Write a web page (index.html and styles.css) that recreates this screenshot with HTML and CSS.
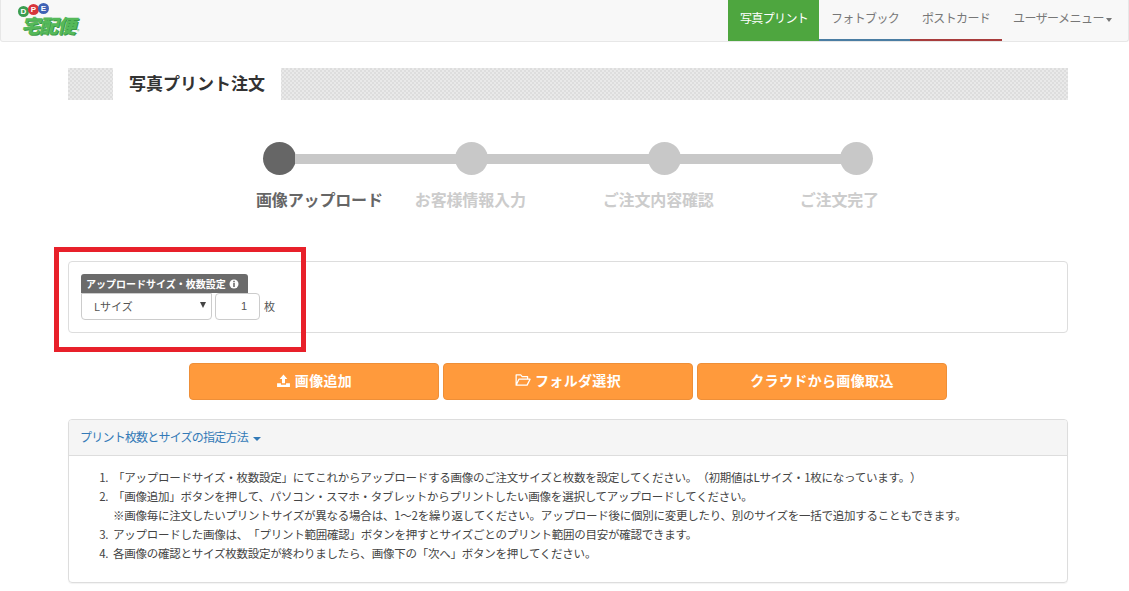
FILE: index.html
```html
<!DOCTYPE html>
<html lang="ja">
<head>
<meta charset="utf-8">
<title>写真プリント注文</title>
<link rel="stylesheet" href="styles.css">
</head>
<body>
<nav class="navbar">
  <div class="logo">
    <div class="logo-dots"><span class="dot dot-d">D</span><span class="dot dot-p">P</span><span class="dot dot-e">E</span></div>
    <div class="logo-name">宅配便<span class="logo-r">®</span></div>
  </div>
  <ul class="nav">
    <li class="nav-item nav-print">写真プリント</li>
    <li class="nav-item nav-book">フォトブック</li>
    <li class="nav-item nav-card">ポストカード</li>
    <li class="nav-item nav-user">ユーザーメニュー<span class="caret"></span></li>
  </ul>
</nav>
<main class="container">
  <h1 class="title-band"><span class="title-text">写真プリント注文</span></h1>

  <div class="stepper">
    <div class="track">
      <span class="circle circle-on"></span><span class="bar"></span>
      <span class="circle"></span><span class="bar"></span>
      <span class="circle"></span><span class="bar"></span>
      <span class="circle"></span>
    </div>
    <div class="step-labels">
      <span class="step-label step-on">画像アップロード</span>
      <span class="step-label step-2">お客様情報入力</span>
      <span class="step-label step-3">ご注文内容確認</span>
      <span class="step-label step-4">ご注文完了</span>
    </div>
  </div>

  <section class="size-panel">
    <div class="tag">アップロードサイズ・枚数設定
      <svg class="info" viewBox="0 0 10 10" width="10" height="10"><circle cx="5" cy="5" r="4.5" fill="#fff"/><rect x="4.2" y="1.8" width="1.6" height="1.5" fill="#6b6b6b"/><rect x="4.2" y="4" width="1.6" height="4" fill="#6b6b6b"/></svg>
    </div>
    <div class="size-row">
      <div class="select">Lサイズ<span class="select-arrow"></span></div>
      <div class="qty">1</div>
      <span class="unit">枚</span>
    </div>
  </section>

  <div class="actions">
    <button class="btn">
      <svg class="btn-icon" viewBox="0 0 14 14" width="15" height="15"><path d="M7 1.5 10.6 5.6H8.4V9.6H5.6V5.6H3.4Z" fill="#fff"/><path d="M1 9.5H4.6V11H9.4V9.5H13V13H1Z" fill="#fff"/></svg>
      画像追加</button>
    <button class="btn">
      <svg class="btn-icon" viewBox="0 0 14 14" width="16" height="16"><path d="M1 11.5V2.5H5L6.3 4H11V6.3M1 11.5H10.6L13.2 6.3H3.4L1 11.5Z" fill="none" stroke="#fff" stroke-width="1.1" stroke-linejoin="round"/></svg>
      フォルダ選択</button>
    <button class="btn">クラウドから画像取込</button>
  </div>

  <section class="help-panel">
    <div class="help-head">プリント枚数とサイズの指定方法<span class="caret caret-blue"></span></div>
    <ol class="help-list">
      <li>「アップロードサイズ・枚数設定」にてこれからアップロードする画像のご注文サイズと枚数を設定してください。（初期値はLサイズ・1枚になっています。）</li>
      <li>「画像追加」ボタンを押して、パソコン・スマホ・タブレットからプリントしたい画像を選択してアップロードしてください。<br>※画像毎に注文したいプリントサイズが異なる場合は、1～2を繰り返してください。アップロード後に個別に変更したり、別のサイズを一括で追加することもできます。</li>
      <li>アップロードした画像は、「プリント範囲確認」ボタンを押すとサイズごとのプリント範囲の目安が確認できます。</li>
      <li>各画像の確認とサイズ枚数設定が終わりましたら、画像下の「次へ」ボタンを押してください。</li>
    </ol>
  </section>
</main>
<div class="annotation"></div>
</body>
</html>
```

FILE: styles.css
```css
* { box-sizing: border-box; }
html, body { margin: 0; padding: 0; height: 591px; overflow: hidden; }
body {
  position: relative;
  background: #fff;
  color: #333;
  font-family: "Liberation Sans", "Noto Sans CJK JP", sans-serif;
  font-size: 12px;
  text-spacing-trim: space-all;
}
.navbar {
  height: 42px;
  display: flex;
  justify-content: space-between;
  background: #f8f8f8;
  border: 1px solid #e7e7e7;
  border-top: 0;
  border-radius: 0 0 3px 3px;
}
.logo { padding: 4px 0 0 17px; width: 90px; }
.logo-dots { display: flex; height: 12px; }
.dot {
  width: 11px; height: 11px; border-radius: 50%; margin-right: -1px;
  color: #fff; font-size: 8px; font-weight: 700; line-height: 11px; text-align: center;
  font-family: "Liberation Sans", sans-serif;
}
.dot-d { background: #3a9d50; margin-top: 2px; }
.dot-p { background: #d8353b; }
.dot-e { background: #3f62b5; margin-top: -1px; }
.logo-name {
  margin-left: 3px;
  font-family: "Noto Sans CJK JP", sans-serif;
  font-size: 19px; line-height: 17px; font-weight: 900; font-style: italic;
  color: #55b95a;
  text-shadow: 1px 1px 0 #3d9a48;
  letter-spacing: -1px;
  white-space: nowrap;
}
.logo-r { font-size: 5px; font-style: normal; font-weight: 400; text-shadow: none; margin-left: 2px; }
.nav { list-style: none; margin: 0; padding: 0; display: flex; height: 41px; }
.nav-item {
  font-family: "Noto Sans CJK JP", sans-serif;
  height: 41px; padding: 0 12px; line-height: 36px; color: #777; white-space: nowrap;
  letter-spacing: -.65px;
  border-bottom: 2px solid transparent;
}
.nav-print { width: 91px; background: #4ea63f; color: #fff; border-bottom-color: #4ea63f; }
.nav-book { width: 91px; border-bottom-color: #4a7da3; }
.nav-card { width: 92px; border-bottom-color: #a83c3c; }
.nav-user { width: 126px; padding-left: 11px; letter-spacing: -.55px; }
.caret {
  display: inline-block; width: 0; height: 0; margin-left: 2px; vertical-align: middle;
  border-top: 4px solid #777; border-left: 3px solid transparent; border-right: 3px solid transparent;
}
.caret-blue { border-top-color: #337ab7; border-left-width: 4px; border-right-width: 4px; margin-left: 5px; }
.container { width: 1000px; margin: 26px 0 0 68px; font-family: "Noto Sans CJK JP", sans-serif; }
.title-band {
  margin: 0;
  height: 32px;
  padding-left: 45px;
  font-size: 17px;
  background-color: #e4e4e4;
  background-image: repeating-conic-gradient(#dddddd 0 25%, #e9e9e9 0 50%);
  background-size: 4px 4px;
}
.title-text {
  display: block; width: 168px; height: 32px; background: #fff; text-align: center;
  line-height: 29px; font-weight: 700; color: #333;
}
.stepper { margin-top: 42px; height: 119px; }
.track { display: flex; align-items: center; margin-left: 195px; width: 610px; }
.circle { width: 33px; height: 33px; border-radius: 50%; background: #c8c8c8; flex: none; }
.circle-on { background: #666; }
.bar { flex: 1; height: 10px; background: #c8c8c8; margin: 0 -1px; }
.step-labels { display: flex; margin-top: 12px; font-size: 16px; line-height: 24px; font-weight: 700; color: #ccc; letter-spacing: -.15px; }
.step-label { white-space: nowrap; }
.step-on { color: #666; margin-left: 188px; }
.step-2 { margin-left: 32px; }
.step-3 { margin-left: 77px; }
.step-4 { margin-left: 86px; }
.size-panel {
  height: 72px; padding: 12px; border: 1px solid #ddd; border-radius: 4px; background: #fff;
}
.tag {
  width: 167px; height: 19px; padding-left: 5px; background: #6b6b6b; color: #fff;
  border-radius: 3px 3px 0 0; font-size: 10px; font-weight: 700; line-height: 18px; white-space: nowrap;
  display: flex; align-items: center; gap: 3px;
}
.info { flex: none; }
.size-row { display: flex; align-items: center; }
.select {
  width: 131px; height: 27px; border: 1px solid #ccc; border-radius: 0 0 4px 4px; color: #555;
  padding-left: 12px; line-height: 25px; position: relative; font-size: 11px;
}
.select-arrow {
  position: absolute; right: 5px; top: 8px; width: 0; height: 0;
  border-top: 6px solid #444; border-left: 3px solid transparent; border-right: 3px solid transparent;
}
.qty {
  width: 45px; height: 27px; margin-left: 3px; border: 1px solid #ccc; border-radius: 4px;
  text-align: right; padding-right: 12px; line-height: 25px; color: #555; font-size: 11px;
  font-family: "Liberation Sans", sans-serif;
}
.unit { margin-left: 4px; color: #555; font-size: 11px; padding-bottom: 2px; }
.actions { display: flex; justify-content: center; gap: 4px; margin-top: 30px; }
.btn {
  width: 250px; height: 37px; padding: 0 0 3px; background: #ff9a3c; border: 1px solid #ee8f38; border-radius: 4px;
  color: #fff; font-family: "Noto Sans CJK JP", sans-serif; font-size: 14px; font-weight: 700; letter-spacing: .35px;
  display: flex; align-items: center; justify-content: center; gap: 4px;
}
.btn-icon { flex: none; }
.help-panel {
  margin-top: 19px; height: 164px; border: 1px solid #ddd; border-radius: 4px;
  box-shadow: 0 1px 1px rgba(0,0,0,.05); overflow: hidden;
}
.help-head {
  height: 36px; padding-left: 11px; background: #f5f5f5; border-bottom: 1px solid #ddd;
  color: #337ab7; line-height: 34px; font-size: 12px; letter-spacing: -.78px;
}
.help-list { margin: 12px 0 0; padding: 0 0 0 44px; font-size: 11.5px; line-height: 19px; color: #444; letter-spacing: -.24px; }
.help-list li::marker { content: counter(list-item) ".  "; white-space: pre; }
.annotation {
  position: absolute; left: 54px; top: 247px; width: 252px; height: 105px; border: 5px solid #e8202a;
}
```
